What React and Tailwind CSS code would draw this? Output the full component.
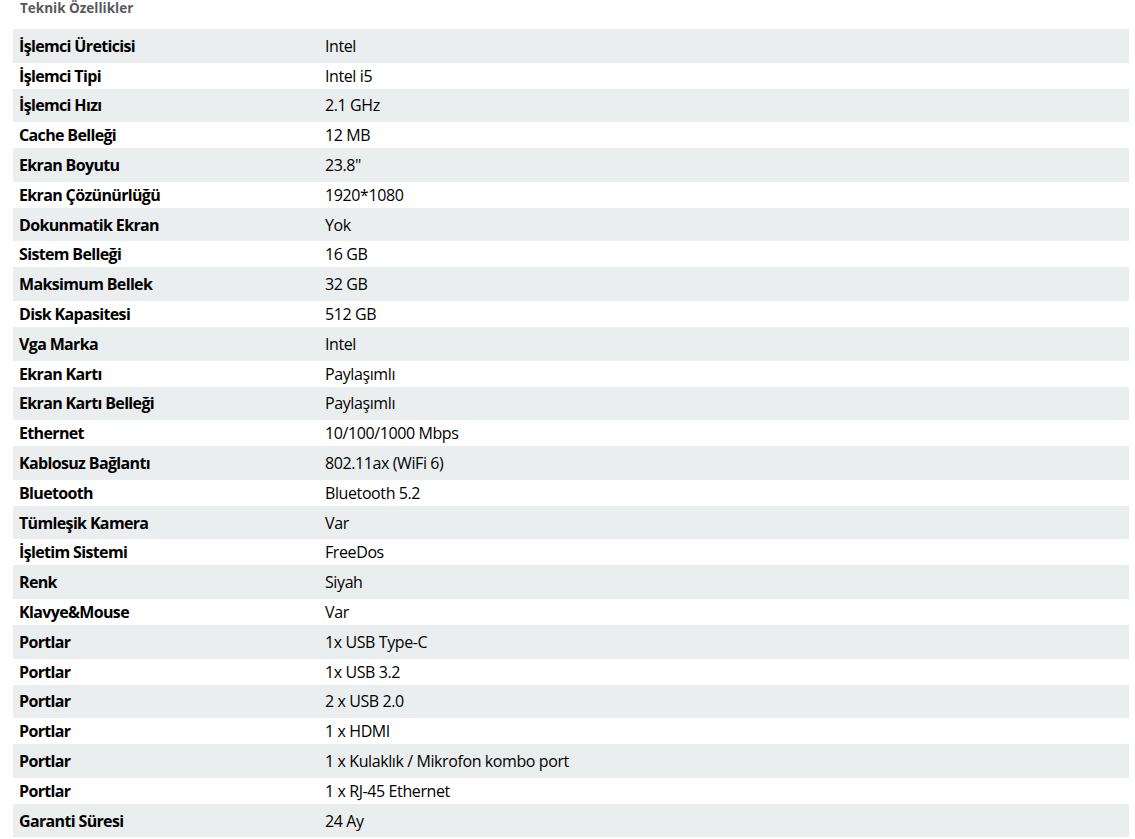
import React from "react";

const specs = [
  ["İşlemci Üreticisi", "Intel"],
  ["İşlemci Tipi", "Intel i5"],
  ["İşlemci Hızı", "2.1 GHz"],
  ["Cache Belleği", "12 MB"],
  ["Ekran Boyutu", '23.8"'],
  ["Ekran Çözünürlüğü", "1920*1080"],
  ["Dokunmatik Ekran", "Yok"],
  ["Sistem Belleği", "16 GB"],
  ["Maksimum Bellek", "32 GB"],
  ["Disk Kapasitesi", "512 GB"],
  ["Vga Marka", "Intel"],
  ["Ekran Kartı", "Paylaşımlı"],
  ["Ekran Kartı Belleği", "Paylaşımlı"],
  ["Ethernet", "10/100/1000 Mbps"],
  ["Kablosuz Bağlantı", "802.11ax (WiFi 6)"],
  ["Bluetooth", "Bluetooth 5.2"],
  ["Tümleşik Kamera", "Var"],
  ["İşletim Sistemi", "FreeDos"],
  ["Renk", "Siyah"],
  ["Klavye&Mouse", "Var"],
  ["Portlar", "1x USB Type-C"],
  ["Portlar", "1x USB 3.2"],
  ["Portlar", "2 x USB 2.0"],
  ["Portlar", "1 x HDMI"],
  ["Portlar", "1 x Kulaklık / Mikrofon kombo port"],
  ["Portlar", "1 x RJ-45 Ethernet"],
  ["Garanti Süresi", "24 Ay"],
];

function App() {
  return (
    <div
      className="min-h-screen bg-white"
      style={{ fontFamily: '"Open Sans", "Noto Sans", sans-serif' }}
    >
      <h2 className="pl-[20px] h-[29px] text-[13.5px] font-bold text-[#555a5e] leading-[16px]">
        Teknik Özellikler
      </h2>

      <div className="ml-[13px] w-[1116px]">
        {specs.map(([label, value], i) => (
          <div
            key={i}
            className={
              i % 2 === 0
                ? "flex items-center h-[33.6px] bg-[#eaeeef] text-[16px] text-black"
                : "flex items-center h-[26px] bg-white text-[16px] text-black"
            }
          >
            <span className="w-[312px] pl-[6px] font-bold tracking-[-0.65px]">
              {label}
            </span>
            <span className="tracking-[-0.4px]">{value}</span>
          </div>
        ))}
      </div>
    </div>
  );
}

export default App;
